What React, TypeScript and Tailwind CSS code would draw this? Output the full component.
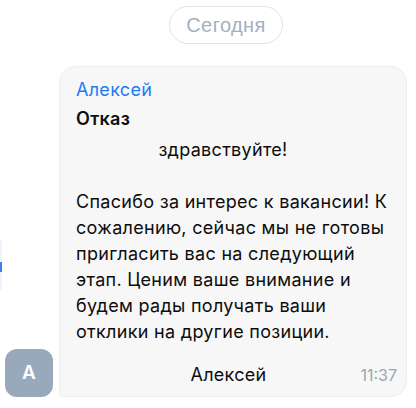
const lines = [
  'Спасибо за интерес к вакансии! К',
  'сожалению, сейчас мы не готовы',
  'пригласить вас на следующий',
  'этап. Ценим ваше внимание и',
  'будем рады получать ваши',
  'отклики на другие позиции.',
];

export default function App() {
  return (
    <div className="relative w-[416px] h-[408px] bg-white overflow-hidden font-['Inter',sans-serif]">
      {/* edge of the list panel behind */}
      <div className="absolute left-0 top-[240px] w-[2px] h-[50px] bg-[#eef5fd]" />
      <div className="absolute left-0 top-[262px] w-[2px] h-[10px] bg-[#3d7eea]" />

      <div className="flex justify-center pt-[6px] pl-[36px]">
        <div className="h-[38px] px-[16px] flex items-center rounded-full border border-[#dde3ea] text-[20px] tracking-[0.4px] text-[#a3b0bf] font-['Liberation_Sans',sans-serif]">
          Сегодня
        </div>
      </div>

      <div className="flex items-end gap-[6px] pl-[5px] mt-[22px]">
        <div className="w-[48px] h-[48px] shrink-0 rounded-[12px] bg-[#97a9bb] flex items-center justify-center text-white text-[19px] font-semibold">
          А
        </div>
        <div className="w-[348px] rounded-[16px] rounded-bl-[4px] bg-[#f7f7f7] border border-[#efefef] px-[16px] pt-[10px] pb-[8px] text-[18px] text-[#0d0d0d] tracking-[0.3px]">
          <div className="text-[#1a7cf5] leading-[26px]">Алексей</div>
          <div className="font-semibold leading-[26px] mt-[3px]">Отказ</div>
          <div className="leading-[26px] mt-[5px] text-center pr-[20px]">здравствуйте!</div>
          <div className="leading-[26px] mt-[26px] whitespace-nowrap">
            {lines.map((l) => (
              <div key={l}>{l}</div>
            ))}
          </div>
          <div className="relative flex justify-center mt-[17px] pr-[9px] leading-[26px]">
            <span>Алексей</span>
            <span className="absolute right-[-7px] top-0 text-[#9aa6b2] text-[16px] tracking-normal">11:37</span>
          </div>
        </div>
      </div>
    </div>
  );
}
